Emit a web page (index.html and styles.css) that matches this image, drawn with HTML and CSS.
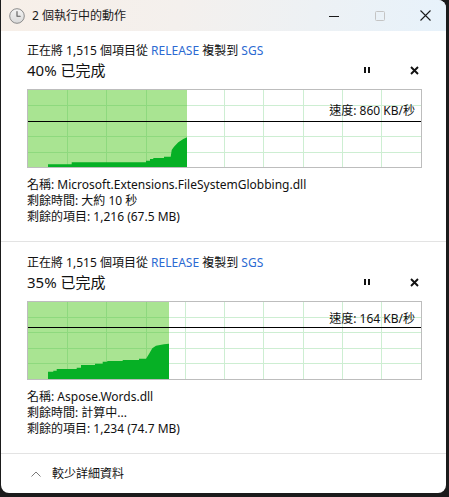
FILE: index.html
```html
<!DOCTYPE html>
<html lang="zh-Hant">
<head>
<meta charset="utf-8">
<title>2 個執行中的動作</title>
<link rel="stylesheet" href="styles.css">
</head>
<body>
<div class="window">
  <div class="titlebar">
    <svg class="clock" width="16" height="16" viewBox="0 0 16 16">
      <defs>
        <linearGradient id="cg" x1="0" y1="0" x2="0" y2="1">
          <stop offset="0" stop-color="#f4f4f4"/>
          <stop offset="1" stop-color="#d9d9d9"/>
        </linearGradient>
      </defs>
      <circle cx="8" cy="8" r="7.3" fill="url(#cg)" stroke="#8a8a8a" stroke-width="1"/>
      <path d="M8 3.6V8.3H11.2" fill="none" stroke="#5a5a5a" stroke-width="1.1" stroke-linecap="round" stroke-linejoin="round"/>
    </svg>
    <span class="title">2 個執行中的動作</span>
    <div class="win-controls">
      <div class="win-btn">
        <svg width="10" height="10" viewBox="0 0 10 10"><path d="M0 5.5H10" stroke="#1a1a1a" stroke-width="1"/></svg>
      </div>
      <div class="win-btn">
        <svg width="10" height="10" viewBox="0 0 10 10"><rect x="0.5" y="0.5" width="9" height="9" rx="1" fill="none" stroke="#c4c4c4" stroke-width="1"/></svg>
      </div>
      <div class="win-btn">
        <svg width="11" height="11" viewBox="0 0 11 11"><path d="M0.5 0.5L10.5 10.5M10.5 0.5L0.5 10.5" stroke="#1a1a1a" stroke-width="1.1"/></svg>
      </div>
    </div>
  </div>

  <div class="op">
    <div class="status">正在將 1,515 個項目從 <span class="link">RELEASE</span> 複製到 <span class="link">SGS</span></div>
    <div class="progress-row">
      <span class="pct">40% 已完成</span>
      <div class="op-buttons">
        <div class="op-btn"><svg width="8" height="8" viewBox="0 0 8 8" shape-rendering="crispEdges"><rect x="1" y="1" width="2" height="6" fill="#111"/><rect x="5" y="1" width="2" height="6" fill="#111"/></svg></div>
        <div class="op-btn"><svg width="9" height="9" viewBox="0 0 9 9"><path d="M1 1L8 8M8 1L1 8" stroke="#111" stroke-width="1.9"/></svg></div>
      </div>
    </div>
    <div class="graph">
      <svg width="393" height="77" viewBox="0 0 393 77" shape-rendering="crispEdges">
        <g stroke="#cdeed2" stroke-width="1">
          <path d="M39.5 0V77M78.5 0V77M118.5 0V77M157.5 0V77M196.5 0V77M235.5 0V77M275.5 0V77M314.5 0V77M353.5 0V77"/>
          <path d="M0 15.5H393M0 31.5H393M0 46.5H393M0 62.5H393"/>
        </g>
        <rect x="0" y="0" width="159" height="77" fill="#a9e492"/>
        <g stroke="#8ed97e" stroke-width="1">
          <path d="M39.5 0V77M78.5 0V77M118.5 0V77"/>
          <path d="M0 15.5H159M0 31.5H159M0 46.5H159M0 62.5H159"/>
        </g>
        <polygon shape-rendering="auto" fill="#06b025" points="20,77 20,74.3 43.7,74.3 43.7,72.3 118,72.3 118,70.7 122,70.7 122,69 125.3,69 125.3,68 136,68 136,66.7 142.7,66.7 143.7,60 146,56.7 150.3,52.3 155.3,49 159,47.3 159,77"/>
        <rect x="0" y="30.5" width="393" height="1.4" fill="#000"/>
      </svg>
      <span class="speed" style="top:14px">速度: 860 KB/秒</span>
    </div>
    <div class="info">
      <div>名稱: Microsoft.Extensions.FileSystemGlobbing.dll</div>
      <div>剩餘時間: 大約 10 秒</div>
      <div>剩餘的項目: 1,216 (67.5 MB)</div>
    </div>
  </div>

  <div class="op">
    <div class="status">正在將 1,515 個項目從 <span class="link">RELEASE</span> 複製到 <span class="link">SGS</span></div>
    <div class="progress-row">
      <span class="pct">35% 已完成</span>
      <div class="op-buttons">
        <div class="op-btn"><svg width="8" height="8" viewBox="0 0 8 8" shape-rendering="crispEdges"><rect x="1" y="1" width="2" height="6" fill="#111"/><rect x="5" y="1" width="2" height="6" fill="#111"/></svg></div>
        <div class="op-btn"><svg width="9" height="9" viewBox="0 0 9 9"><path d="M1 1L8 8M8 1L1 8" stroke="#111" stroke-width="1.9"/></svg></div>
      </div>
    </div>
    <div class="graph">
      <svg width="393" height="77" viewBox="0 0 393 77" shape-rendering="crispEdges">
        <g stroke="#cdeed2" stroke-width="1">
          <path d="M39.5 0V77M78.5 0V77M118.5 0V77M157.5 0V77M196.5 0V77M235.5 0V77M275.5 0V77M314.5 0V77M353.5 0V77"/>
          <path d="M0 15.5H393M0 30.5H393M0 46.5H393M0 61.5H393"/>
        </g>
        <rect x="0" y="0" width="141" height="77" fill="#a9e492"/>
        <g stroke="#8ed97e" stroke-width="1">
          <path d="M39.5 0V77M78.5 0V77M118.5 0V77"/>
          <path d="M0 15.5H141M0 30.5H141M0 46.5H141M0 61.5H141"/>
        </g>
        <polygon shape-rendering="auto" fill="#06b025" points="20,77 20,69.7 25.3,69.7 25.3,68.7 28.7,68.7 28.7,67 48.7,67 48.7,65.7 53,65.7 53,63 67,63 67,61.7 74.7,61.7 74.7,59.7 79.3,59.7 79.3,59 94.7,59 94.7,58 111,58 111,56.7 118,56.7 121,52 124.3,46.3 128,43.7 136,42.3 141,41.7 141,77"/>
        <rect x="0" y="24.5" width="393" height="1.4" fill="#000"/>
      </svg>
      <span class="speed" style="top:10px">速度: 164 KB/秒</span>
    </div>
    <div class="info">
      <div>名稱: Aspose.Words.dll</div>
      <div>剩餘時間: 計算中...</div>
      <div>剩餘的項目: 1,234 (74.7 MB)</div>
    </div>
  </div>

  <div class="footer">
    <svg class="chevron" width="10" height="6" viewBox="0 0 10 6"><path d="M0.5 5.5L5 1L9.5 5.5" fill="none" stroke="#7a7a7a" stroke-width="1"/></svg>
    <span class="footer-text">較少詳細資料</span>
  </div>
</div>
</body>
</html>
```

FILE: styles.css
```css
html, body {
  margin: 0;
  padding: 0;
}

body {
  width: 449px;
  height: 497px;
  overflow: hidden;
  background: #1b1b1b;
  font-family: "Noto Sans", "Noto Sans CJK TC", sans-serif;
  color: #111;
}

.window {
  margin-left: 1px;
  width: 445px;
  height: 493px;
  background: #fff;
  border-radius: 0 8px 8px 8px;
  overflow: hidden;
  display: flex;
  flex-direction: column;
}

.titlebar {
  height: 31px;
  flex: none;
  display: flex;
  align-items: center;
  background: linear-gradient(100deg, #f7efe8 0%, #f4f0ed 40%, #edf1f4 70%, #e7f2fb 100%);
}

.clock {
  margin-left: 8px;
  flex: none;
}

.title {
  margin-left: 7px;
  font-size: 12px;
  line-height: 16px;
  color: #1a1a1a;
}

.win-controls {
  margin-left: auto;
  margin-right: -2px;
  display: flex;
  height: 31px;
}

.win-btn {
  width: 45.5px;
  height: 31px;
  display: flex;
  align-items: center;
  justify-content: center;
}

.op {
  padding: 12px 24px 0 26px;
  height: 211px;
  box-sizing: border-box;
  border-bottom: 1px solid #e3e3e3;
  flex: none;
}

.op + .op {
  height: 212px;
  padding-top: 13px;
}

.status {
  font-size: 12px;
  line-height: 16px;
  white-space: nowrap;
}

.link {
  color: #2c6ad2;
}

.progress-row {
  display: flex;
  align-items: center;
  height: 22px;
}

.pct {
  font-size: 15px;
  line-height: 22px;
}

.op-buttons {
  margin-left: auto;
  display: flex;
  gap: 31px;
}

.op-btn {
  width: 16px;
  height: 16px;
  display: flex;
  align-items: center;
  justify-content: center;
}

.graph {
  position: relative;
  margin-top: 8px;
  width: 393px;
  height: 77px;
  border: 1px solid #bdbdbd;
}

.graph svg {
  display: block;
}

.speed {
  position: absolute;
  right: 6px;
  font-size: 12px;
  line-height: 14px;
  white-space: nowrap;
}

.info {
  margin-top: 9px;
  font-size: 12px;
  line-height: 16px;
  white-space: nowrap;
}

.footer {
  flex: 1;
  display: flex;
  align-items: center;
  padding-left: 30px;
}

.chevron {
  flex: none;
}

.footer-text {
  margin-left: 11px;
  font-size: 12px;
  line-height: 16px;
}
```
